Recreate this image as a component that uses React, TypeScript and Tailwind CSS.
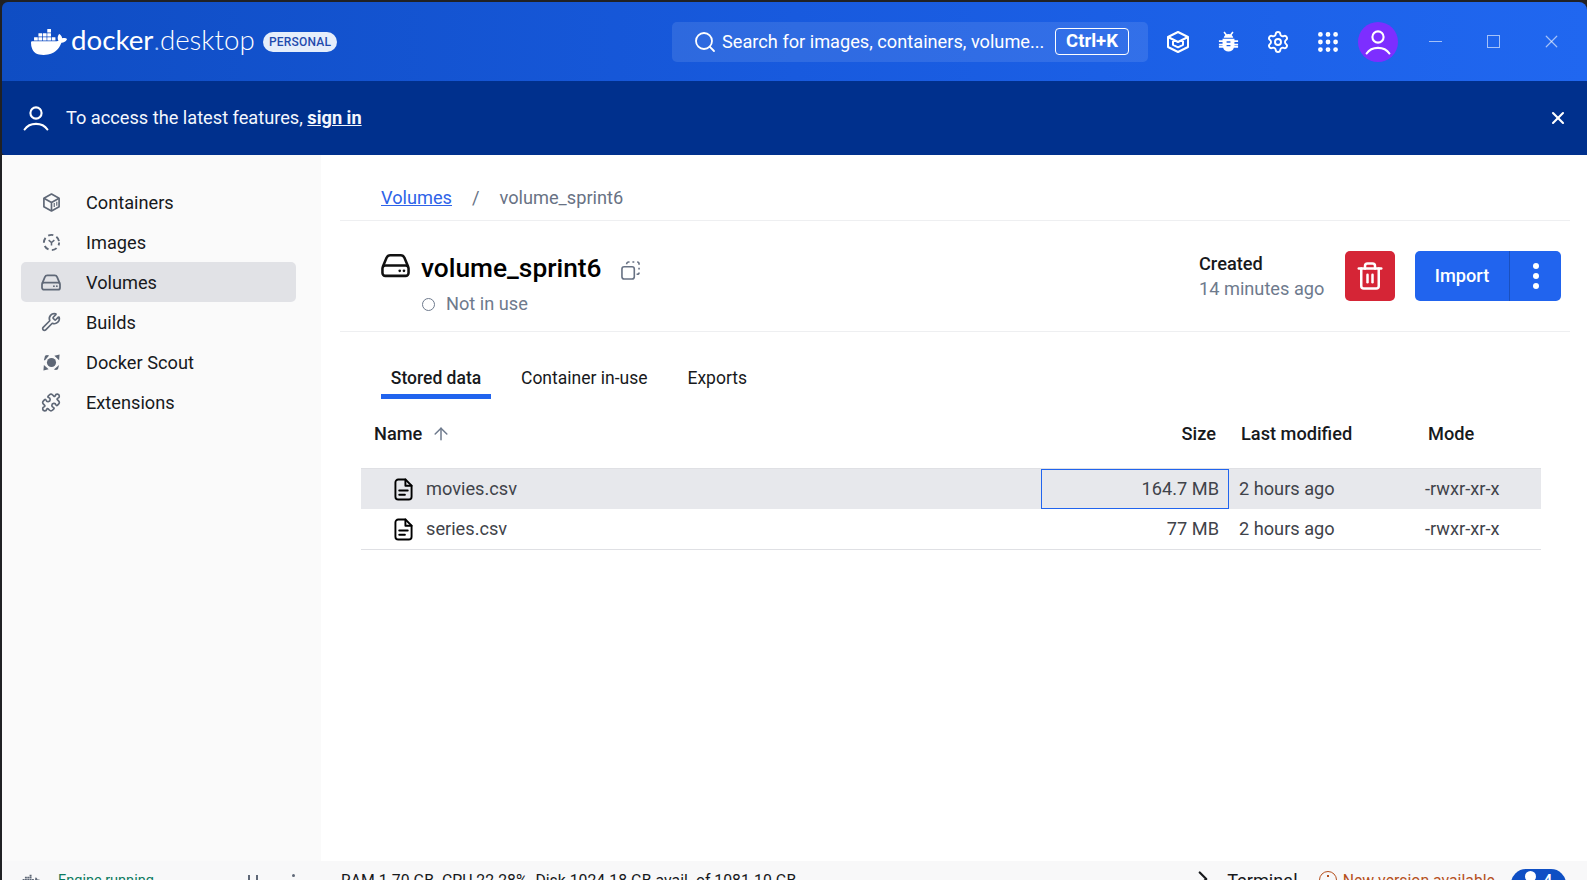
import { ArrowUp, ChevronRight, Grip, Puzzle, Search, Settings, Trash2, Wrench, X } from "lucide-react";
import { SiDocker } from "react-icons/si";

const DriveIcon = ({ className }: { className: string }) => (
  <svg viewBox="0 0 24 20" fill="none" stroke="currentColor" strokeWidth="2.1" className={className}>
    <path d="M1.5 11 4.6 3.600C5.100 2.400 6 1.500 7.500 1.500h9c1.500 0 2.400.9 2.900 2.100l3.100 7.400" />
    <rect x="1.200" y="10" width="21.600" height="8.600" rx="2.400" />
    <circle cx="15.500" cy="14.400" r="1.100" fill="currentColor" stroke="none" />
    <circle cx="19" cy="14.400" r="1.100" fill="currentColor" stroke="none" />
  </svg>
);

const ContainerIcon = () => (
  <svg viewBox="0 0 18 18" fill="none" stroke="currentColor" strokeWidth="1.6" className="w-[19px] h-[19px]">
    <path d="M9 1 16.200 5v8L9 17l-7.200-4V5z" strokeLinejoin="round" />
    <path d="M1.800 5 9 9l7.200-4M9 9v8" />
    <path d="M11.600 9.500v3.800M14 8.200v3.800" strokeWidth="1.100" />
  </svg>
);

const ImagesIcon = () => (
  <svg viewBox="0 0 20 20" fill="none" stroke="currentColor" strokeWidth="2" className="w-[19px] h-[19px]">
    <circle cx="10" cy="10" r="8" strokeDasharray="5.500 3.600" strokeDashoffset="2.500" />
    <path d="M7 7.500 10 10l3-2.500M10 10v3.200" strokeWidth="1.600" />
  </svg>
);

const ScoutIcon = () => (
  <svg viewBox="0 0 20 20" fill="currentColor" className="w-[19px] h-[19px]">
    <circle cx="10" cy="10" r="4.800" />
    <path d="M2 7.500 3.200 3 5.200 2 7.500 2.600 3.200 7.500zM18.500 1.500 18 7.500 13 2.800zM1.500 18.500 2 12.500 7 17.200zM18 12.500 16.800 17 14.800 18 12.500 17.400z" />
  </svg>
);

const UserIcon = ({ className }: { className: string }) => (
  <svg viewBox="0 0 26 26" fill="none" stroke="currentColor" strokeWidth="2.100" strokeLinecap="round" className={className}>
    <circle cx="13" cy="8" r="5.600" />
    <path d="M1.600 24.500c2.400-3.600 6.600-5.600 11.400-5.600s9 2 11.400 5.600" />
  </svg>
);

const GradIcon = () => (
  <svg viewBox="0 0 24 24" fill="none" stroke="currentColor" strokeWidth="2" strokeLinejoin="round" className="w-[24px] h-[24px]">
    <path d="M12 2 22 7v10l-10 5-10-5V7z" />
    <path d="M2 7l10 5 10-5M7 9.600v5.200l5 2.500 5-2.500V9.600" />
  </svg>
);

const BugIcon = () => (
  <svg viewBox="0 0 24 24" fill="currentColor" className="w-[23px] h-[23px]">
    <path d="M8 1.500 10.200 4.400a5 5 0 0 1 3.600 0L16 1.500l1.300 1-2 2.800A5 5 0 0 1 17 8H7a5 5 0 0 1 1.700-2.700l-2-2.800z" />
    <path fillRule="evenodd" d="M5.800 9h12.400v1.800H22v1.800h-3.800v1.800H22v1.800h-3.800v.6H22v1.800h-4.400A5.800 5.800 0 0 1 12 22.500a5.800 5.800 0 0 1-5.600-3.900H2v-1.800h3.800v-.6H2v-1.800h3.800v-1.800H2v-1.800h3.800zM10 11.800v1.400h4v-1.400zm0 3.800v1.400h4v-1.400z" />
  </svg>
);

const CopyIcon = () => (
  <svg viewBox="0 0 20 20" fill="none" stroke="currentColor" strokeWidth="1.700" className="w-[19px] h-[19px]">
    <rect x="1" y="6" width="13" height="13" rx="2.400" />
    <path d="M6 3.400V3a2 2 0 0 1 2-2h1M12 1h2M17 1a2 2 0 0 1 2 2v1M19 7v2M19 12a2 2 0 0 1-2 2h-.6" />
  </svg>
);

const FileIcon = () => (
  <svg viewBox="0 0 20 24" fill="none" stroke="currentColor" strokeWidth="2" strokeLinecap="round" strokeLinejoin="round" className="w-[19px] h-[23px]">
    <path d="M12 1.500H4.500a3 3 0 0 0-3 3v15a3 3 0 0 0 3 3h11a3 3 0 0 0 3-3V8z" />
    <path d="M12 1.500V8h6.500M5.500 13h9M5.500 17.500h6" />
  </svg>
);

const navItems = [
  { label: "Containers", icon: <ContainerIcon /> },
  { label: "Images", icon: <ImagesIcon /> },
  { label: "Volumes", icon: <DriveIcon className="w-[20px] h-[17px]" />, active: true },
  { label: "Builds", icon: <Wrench className="w-[20px] h-[20px]" strokeWidth={2} /> },
  { label: "Docker Scout", icon: <ScoutIcon /> },
  { label: "Extensions", icon: <Puzzle className="w-[21px] h-[21px]" strokeWidth={2} /> },
];

const rows = [
  { name: "movies.csv", size: "164.7 MB", selected: true },
  { name: "series.csv", size: "77 MB", selected: false },
];

export default function App() {
  return (
    <div className="w-[1587px] h-[880px] overflow-hidden bg-[#202124] pt-[2px] pl-[2px] flex flex-col font-['Roboto',sans-serif] text-[18.200px] text-[#17191c]">
      {/* title bar */}
      <header className="h-[79px] shrink-0 flex items-center rounded-tl-[6px] rounded-tr-[8px] bg-gradient-to-r from-[#0f4dc3] via-[#185ade] to-[#2067f0] text-white">
        <SiDocker className="ml-[29px] w-[36px] h-[36px]" />
        <div className="ml-[4px] w-[191px] pb-[3px] flex items-baseline font-['Lato',sans-serif] text-[27.700px] leading-none font-light">
          <span className="font-normal">docker</span>
          <span className="text-[#a9c3f3]">.</span>
          <span>desktop</span>
        </div>
        <span className="ml-[1px] h-[20px] px-[6px] flex items-center rounded-full bg-[#e5eefb] text-[#1f4bae] text-[12px] font-medium tracking-[0.2px]">
          PERSONAL
        </span>
        <div className="ml-auto w-[476px] h-[40px] flex items-center rounded-[5px] bg-white/10 pl-[21px]">
          <Search className="w-[24px] h-[24px]" strokeWidth={1.800} />
          <span className="ml-[5px] w-[323px] pt-[1px] whitespace-nowrap">Search for images, containers, volume...</span>
          <span className="ml-[10px] w-[74px] h-[27px] flex items-center justify-center rounded-[4px] border border-white font-bold text-[18.500px]">Ctrl+K</span>
        </div>
        <div className="ml-[5px] flex items-center">
          <div className="w-[50px] flex justify-center"><GradIcon /></div>
          <div className="w-[50px] flex justify-center"><BugIcon /></div>
          <div className="w-[50px] flex justify-center"><Settings className="w-[24px] h-[24px]" strokeWidth={1.900} /></div>
          <div className="w-[50px] flex justify-center"><Grip className="w-[26px] h-[26px]" strokeWidth={2.400} /></div>
          <div className="w-[50px] flex justify-center">
            <div className="w-[40px] h-[40px] rounded-full bg-[#7d2eff] flex items-center justify-center">
              <UserIcon className="w-[26px] h-[26px]" />
            </div>
          </div>
        </div>
        <div className="ml-[3px] mr-[7px] -mt-[1px] flex items-center text-white/60">
          <div className="w-[58px] flex justify-center"><div className="w-[13px] h-[1px] bg-white/60" /></div>
          <div className="w-[58px] flex justify-center"><div className="w-[13px] h-[13px] border border-white/60" /></div>
          <div className="w-[58px] flex justify-center"><X className="w-[21px] h-[21px]" strokeWidth={1.400} /></div>
        </div>
      </header>

      {/* sign-in banner */}
      <div className="h-[74px] shrink-0 flex items-center bg-[#00308d] text-white rounded-bl-[3px]">
        <UserIcon className="ml-[21px] w-[26px] h-[26px]" />
        <span className="ml-[17px] pb-[1px] text-[#f4f7fd]">
          To access the latest features, <span className="font-bold underline">sign in</span>
        </span>
        <X className="ml-auto mr-[19px] w-[20px] h-[20px]" strokeWidth={2.500} />
      </div>

      <div className="h-[706px] shrink-0 flex">
        <aside className="w-[319px] shrink-0 bg-[#fafafa] pt-[27px] pl-[19px]">
          {navItems.map((item) => (
            <div
              key={item.label}
              className={`w-[275px] h-[40px] flex items-center pl-[20px] rounded-[5px] ${item.active ? "bg-[#e1e2e6]" : ""}`}
            >
              <span className="w-[20px] flex justify-center text-[#5f6877]">{item.icon}</span>
              <span className="ml-[25px] pt-[2px]">{item.label}</span>
            </div>
          ))}
        </aside>

        <main className="flex-1 min-w-0 bg-white pl-[19px] pr-[17px]">
          <div className="h-[66px] pt-[31px] pl-[41px] flex border-b border-[#eeeff1] leading-[24px]">
            <span className="text-[#2e63e8] underline">Volumes</span>
            <span className="ml-[20px] text-[#687284]">/</span>
            <span className="ml-[20px] text-[#687284]">volume_sprint6</span>
          </div>

          <div className="h-[111px] flex border-b border-[#eeeff1] pl-[41px] pr-[9px]">
            <DriveIcon className="mt-[32px] w-[29px] h-[25px] text-[#111]" />
            <div className="ml-[11px]">
              <div className="mt-[30px] flex items-center">
                <h1 className="text-[26.300px] leading-[34px] font-medium text-black">volume_sprint6</h1>
                <span className="ml-[19px] mt-[5px] text-[#687284]"><CopyIcon /></span>
              </div>
              <div className="mt-[7px] flex items-center text-[#6e7a8d] leading-[24px]">
                <span className="ml-[1px] w-[13px] h-[13px] rounded-full border-[1.500px] border-[#6e7a8d]" />
                <span className="ml-[11px]">Not in use</span>
              </div>
            </div>
            <div className="ml-auto flex">
              <div className="mt-[30px] w-[146px]">
                <div className="font-medium leading-[25px]">Created</div>
                <div className="text-[#6e7a8d] leading-[25px]">14 minutes ago</div>
              </div>
              <div className="mt-[30px] w-[50px] h-[50px] rounded-[5px] bg-[#d52536] flex items-center justify-center text-white">
                <Trash2 className="w-[30px] h-[30px]" strokeWidth={2} />
              </div>
              <div className="ml-[20px] mt-[30px] h-[50px] flex rounded-[5px] bg-[#2164ee] text-white font-medium">
                <div className="w-[95px] flex items-center justify-center border-r border-[#1a50bf]">Import</div>
                <div className="w-[51px] flex flex-col items-center justify-center gap-[4px]">
                  <span className="w-[6px] h-[6px] rounded-full bg-white" />
                  <span className="w-[6px] h-[6px] rounded-full bg-white" />
                  <span className="w-[6px] h-[6px] rounded-full bg-white" />
                </div>
              </div>
            </div>
          </div>

          <div className="mt-[28px] ml-[41px] h-[39px] flex text-[17.500px]">
            <div className="w-[110px] h-[39px] flex justify-center pt-[6px] border-b-[5px] border-[#2164ee] font-medium leading-[24px]">Stored data</div>
            <div className="ml-[30px] pt-[6px] leading-[24px]">Container in-use</div>
            <div className="ml-[40px] pt-[6px] leading-[24px]">Exports</div>
          </div>

          <div className="ml-[21px] w-[1180px]">
            <div className="h-[69px] flex items-center font-medium">
              <span className="ml-[13px] w-[47px]">Name</span>
              <ArrowUp className="ml-[10px] w-[20px] h-[20px] text-[#6e7a8d]" strokeWidth={1.800} />
              <span className="ml-auto">Size</span>
              <span className="ml-[25px] w-[187px]">Last modified</span>
              <span className="w-[113px]">Mode</span>
            </div>
            <div className="border-y border-[#dfe0e4]">
              {rows.map((row) => (
                <div key={row.name} className={`h-[40px] flex items-center ${row.selected ? "bg-[#e7e8ec]" : ""}`}>
                  <span className="ml-[33px] text-black"><FileIcon /></span>
                  <span className="ml-[13px] w-[615px] text-[#3f434a]">{row.name}</span>
                  <span className={`w-[188px] h-[40px] flex items-center justify-end pr-[9px] text-[#3f434a] border ${row.selected ? "border-[#2164ee]" : "border-transparent"}`}>
                    {row.size}
                  </span>
                  <span className="ml-[10px] w-[186px] text-[#3f434a]">2 hours ago</span>
                  <span className="text-[#3f434a]">-rwxr-xr-x</span>
                </div>
              ))}
            </div>
          </div>
        </main>
      </div>

      {/* status bar, runs off the bottom of the window */}
      <footer className="h-[40px] shrink-0 flex items-start pt-[10px] bg-[#f8f8f9] text-[14.500px] leading-[20px]">
        <SiDocker className="ml-[19px] mt-[1px] w-[19px] h-[19px] text-[#5f6877]" />
        <span className="ml-[18px] w-[190px] text-[#0b7a5e]">Engine running</span>
        <div className="mt-[4px] w-[10px] flex justify-between">
          <span className="w-[2px] h-[12px] bg-[#5f6877]" />
          <span className="w-[2px] h-[12px] bg-[#5f6877]" />
        </div>
        <div className="ml-[34px] mt-[3px] w-[3px] h-[3px] rounded-full bg-[#5f6877]" />
        <span className="ml-[46px] text-[15.800px]">RAM 1.70 GB&nbsp;&nbsp;CPU 22.28%&nbsp;&nbsp;Disk 1024.18 GB avail. of 1081.10 GB</span>
        <div className="ml-auto flex items-start">
          <ChevronRight className="-mt-[5px] w-[26px] h-[26px] text-[#17191c]" strokeWidth={2} />
          <span className="ml-[11px] text-[18.200px]">Terminal</span>
          <span className="ml-[21px] w-[18px] h-[18px] rounded-full border-[1.500px] border-[#b5501d] flex justify-center pt-[3px]">
            <span className="w-[2px] h-[2px] bg-[#b5501d]" />
          </span>
          <span className="ml-[6px] text-[#b5501d] text-[15.800px]">New version available</span>
          <div className="ml-[16px] mr-[21px] -mt-[2px] w-[55px] h-[30px] rounded-full bg-[#0f4fc4] flex justify-center gap-[8px] pt-[2px] text-white font-bold">
            <span className="w-[11px] h-[11px] rounded-full bg-white" />
            <span>4</span>
          </div>
        </div>
      </footer>
    </div>
  );
}
